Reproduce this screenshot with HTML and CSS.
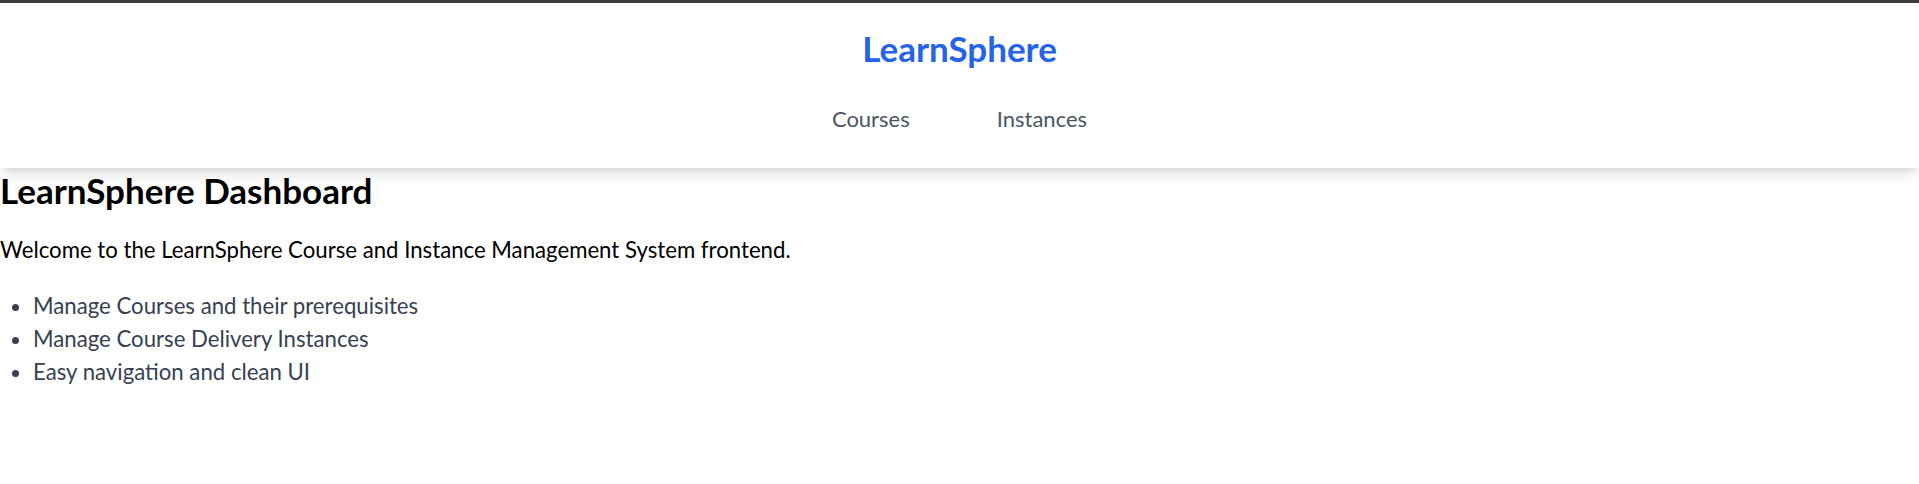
FILE: index.html
```html
<!DOCTYPE html>
<html lang="en">
<head>
<meta charset="utf-8">
<title>LearnSphere</title>
<link rel="stylesheet" href="styles.css">
</head>
<body>
<header class="site-header">
  <h1 class="brand">LearnSphere</h1>
  <nav class="nav">
    <a class="nav-link" href="#">Courses</a>
    <a class="nav-link" href="#">Instances</a>
  </nav>
</header>
<main class="dashboard">
  <h2 class="dashboard-title">LearnSphere Dashboard</h2>
  <p class="intro">Welcome to the LearnSphere Course and Instance Management System frontend.</p>
  <ul class="features">
    <li>Manage Courses and their prerequisites</li>
    <li>Manage Course Delivery Instances</li>
    <li>Easy navigation and clean UI</li>
  </ul>
</main>
</body>
</html>
```
FILE: styles.css
```css
html, body {
  margin: 0;
  padding: 0;
  background: #ffffff;
}
body {
  font-family: Lato, "Liberation Sans", sans-serif;
  color: #000000;
  border-top: 3px solid #3b3b3b;
}
.site-header {
  background: #ffffff;
  padding: 24px 0 36px;
  box-shadow: 0 8px 14px -3px rgba(0, 0, 0, 0.14), 0 3px 6px -3px rgba(0, 0, 0, 0.1);
  display: flex;
  flex-direction: column;
  align-items: center;
  position: relative;
}
.brand {
  margin: 0 0 37px;
  font-size: 35px;
  line-height: 42px;
  font-weight: 700;
  color: #2563eb;
}
.nav {
  display: flex;
  gap: 87px;
}
.nav-link {
  font-size: 22px;
  line-height: 26px;
  color: #4b5563;
  text-decoration: none;
}
.dashboard {
  padding: 0;
}
.dashboard-title {
  margin: 1px 0 22px;
  font-size: 35px;
  line-height: 42px;
  font-weight: 700;
}
.intro {
  margin: 0 0 23px;
  font-size: 22.2px;
  line-height: 33px;
}
.features {
  margin: 0;
  padding-left: 33px;
  font-size: 22.2px;
  line-height: 33px;
  color: #374151;
}
```
